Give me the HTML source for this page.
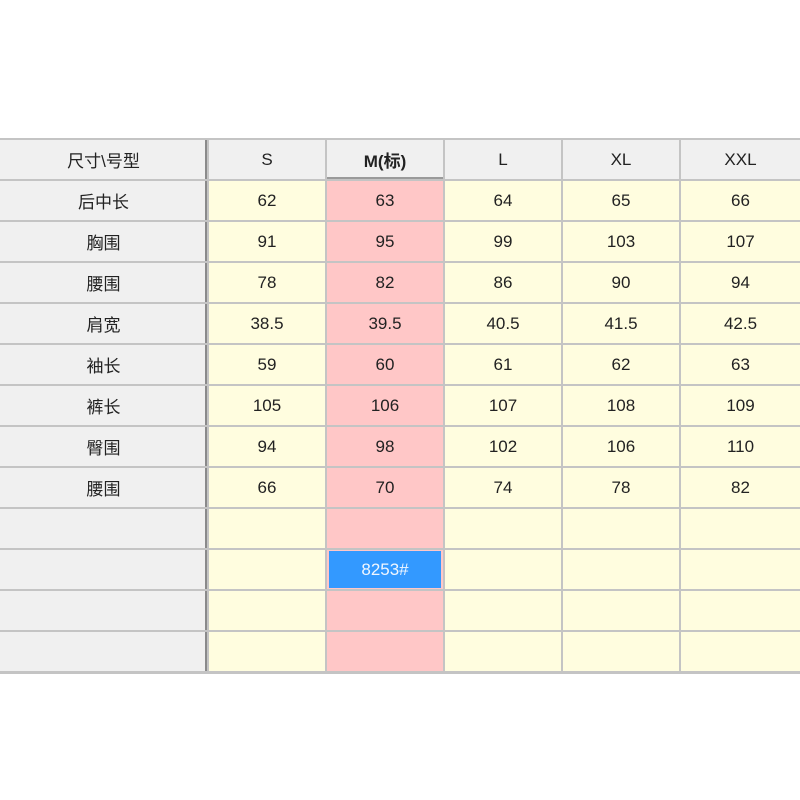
<!DOCTYPE html>
<html><head><meta charset="utf-8"><style>
body{margin:0;width:800px;height:800px;background:#fff;position:relative;overflow:hidden;font-family:"Liberation Sans","Noto Sans CJK SC",sans-serif;}
.g{position:absolute;left:0;top:138px;width:802px;height:534px;background:#c4c4c4;display:grid;grid-template-columns:207px 116px 116px 116px 116px 119px;grid-template-rows:repeat(13,39px);gap:2px;padding-top:2px;}
.g div{display:flex;align-items:center;justify-content:center;font-size:17px;color:#222;}
.h{background:#f0f0f0;}
.r{background:#f0f0f0;box-shadow:inset -2px 0 0 #8a8a8a;}
.y{background:#fffddf;}
.p{background:#ffc7c7;}
.m{font-weight:bold;box-shadow:inset 0 -2px 0 #9a9a9a;}
.b{background:#ffc7c7;}
.b span{background:#3399ff;color:#f0f6ff;width:112px;height:37px;display:flex;align-items:center;justify-content:center;}
</style></head><body>
<div class="g">
<div class="r">尺寸\号型</div><div class="h">S</div><div class="h m">M(标)</div><div class="h">L</div><div class="h">XL</div><div class="h">XXL</div>
<div class="r">后中长</div><div class="y">62</div><div class="p">63</div><div class="y">64</div><div class="y">65</div><div class="y">66</div>
<div class="r">胸围</div><div class="y">91</div><div class="p">95</div><div class="y">99</div><div class="y">103</div><div class="y">107</div>
<div class="r">腰围</div><div class="y">78</div><div class="p">82</div><div class="y">86</div><div class="y">90</div><div class="y">94</div>
<div class="r">肩宽</div><div class="y">38.5</div><div class="p">39.5</div><div class="y">40.5</div><div class="y">41.5</div><div class="y">42.5</div>
<div class="r">袖长</div><div class="y">59</div><div class="p">60</div><div class="y">61</div><div class="y">62</div><div class="y">63</div>
<div class="r">裤长</div><div class="y">105</div><div class="p">106</div><div class="y">107</div><div class="y">108</div><div class="y">109</div>
<div class="r">臀围</div><div class="y">94</div><div class="p">98</div><div class="y">102</div><div class="y">106</div><div class="y">110</div>
<div class="r">腰围</div><div class="y">66</div><div class="p">70</div><div class="y">74</div><div class="y">78</div><div class="y">82</div>
<div class="r"></div><div class="y"></div><div class="p"></div><div class="y"></div><div class="y"></div><div class="y"></div>
<div class="r"></div><div class="y"></div><div class="b"><span>8253#</span></div><div class="y"></div><div class="y"></div><div class="y"></div>
<div class="r"></div><div class="y"></div><div class="p"></div><div class="y"></div><div class="y"></div><div class="y"></div>
<div class="r"></div><div class="y"></div><div class="p"></div><div class="y"></div><div class="y"></div><div class="y"></div>
</div>
</body></html>
